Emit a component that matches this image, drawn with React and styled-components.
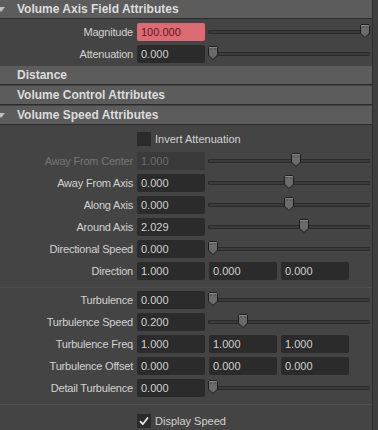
import React from 'react'
import styled, { createGlobalStyle } from "styled-components";

const GlobalStyle = createGlobalStyle`
  body {
    margin: 0;
    background: #444444;
    font-family: "Liberation Sans", Arial, sans-serif;
  }
`;

const speedRows = [
    { label: "Away From Center", value: "1.000", slider: 0.546, disabled: true },
    { label: "Away From Axis", value: "0.000", slider: 0.5 },
    { label: "Along Axis", value: "0.000", slider: 0.5 },
    { label: "Around Axis", value: "2.029", slider: 0.6 },
    { label: "Directional Speed", value: "0.000", slider: 0 },
    { label: "Direction", values: ["1.000", "0.000", "0.000"] },
];

const turbulenceRows = [
    { label: "Turbulence", value: "0.000", slider: 0 },
    { label: "Turbulence Speed", value: "0.200", slider: 0.2 },
    { label: "Turbulence Freq", values: ["1.000", "1.000", "1.000"] },
    { label: "Turbulence Offset", values: ["0.000", "0.000", "0.000"] },
    { label: "Detail Turbulence", value: "0.000", slider: 0 },
];

function Slider({ value }) {
    return <SliderBox>
        <Track />
        <Thumb style={{ left: `${value * 152}px` }} viewBox="0 0 10 14" width="10" height="14">
            <path d="M1.5 0.5 H8.5 L9.5 1.5 V9.2 L5 13.5 L0.5 9.2 V1.5 Z" fill="#6b6b6b" stroke="#1c1c1c" />
            <path d="M1.5 1.5 H8.5" stroke="#8a8a8a" />
            <rect x="2.5" y="2.5" width="1" height="1" fill="#2a2a2a" />
            <rect x="6.5" y="2.5" width="1" height="1" fill="#2a2a2a" />
        </Thumb>
    </SliderBox>;
}

function AttrRow({ row }) {
    return <Row>
        <Label $disabled={row.disabled}>{row.label}</Label>
        {row.values
            ? <Fields>{row.values.map((v, i) => <Field key={i}>{v}</Field>)}</Fields>
            : <>
                <Field $variant={row.disabled ? "disabled" : row.highlight ? "highlight" : "normal"}>{row.value}</Field>
                <Slider value={row.slider} />
            </>}
    </Row>;
}

function CheckBox({ label, checked, after }) {
    return <CheckRow $after={after}>
        <Box>
            {checked && <svg viewBox="0 0 14 14" width="14" height="14">
                <path d="M3 7.2 L5.8 10.2 L11 3.5" fill="none" stroke="#e8e8e8" strokeWidth="1.8" />
            </svg>}
        </Box>
        <CheckText>{label}</CheckText>
    </CheckRow>;
}

export default function App() {
    return <Container>
        <GlobalStyle />
        <Panel>
            <Header $open>Volume Axis Field Attributes</Header>
            <Body $top={4} $bottom={3}>
                <AttrRow row={{ label: "Magnitude", value: "100.000", slider: 1, highlight: true }} />
                <AttrRow row={{ label: "Attenuation", value: "0.000", slider: 0 }} />
            </Body>
            <Header>Distance</Header>
            <Header>Volume Control Attributes</Header>
            <Header $open>Volume Speed Attributes</Header>
            <Body $top={7} $bottom={7}>
                <CheckBox label="Invert Attenuation" after={2} />
                {speedRows.map(r => <AttrRow key={r.label} row={r} />)}
            </Body>
            <Separator />
            <Body $top={1} $bottom={7}>
                {turbulenceRows.map(r => <AttrRow key={r.label} row={r} />)}
            </Body>
            <Separator />
            <Body $top={7} $bottom={6}>
                <CheckBox label="Display Speed" checked />
            </Body>
        </Panel>
        <Strip />
    </Container>;
}

const Container = styled.div`
  display: flex;
  width: 378px;
  height: 430px;
  overflow: hidden;
  background: #444444;
`;

const Panel = styled.div`
  flex: 1;
  display: flex;
  flex-direction: column;
`;

const Strip = styled.div`
  width: 5px;
  border-left: 1px solid #2e2e2e;
  background: #3f3f3f;
`;

const Header = styled.div`
  position: relative;
  height: 18px;
  line-height: 18px;
  padding-left: 17px;
  background: #5c5c5c;
  border-bottom: 1px solid #2c2c2c;
  margin-bottom: 1px;
  color: #dcdcdc;
  font-weight: bold;
  font-size: 12px;
  &::before {
    content: "";
    display: ${p => p.$open ? "block" : "none"};
    position: absolute;
    left: -3px;
    top: 7px;
    border-left: 4px solid transparent;
    border-right: 4px solid transparent;
    border-top: 5px solid #bdbdbd;
  }
`;

const Body = styled.div`
  display: flex;
  flex-direction: column;
  gap: 4px;
  padding: ${p => p.$top}px 0 ${p => p.$bottom}px;
  margin-top: -1px;
`;

const Separator = styled.div`
  height: 1px;
  background: #2c2c2c;
  border-bottom: 1px solid #4e4e4e;
  margin-bottom: 3px;
`;

const Row = styled.div`
  display: flex;
  align-items: center;
  height: 18px;
`;

const Label = styled.div`
  width: 137px;
  padding-right: 4px;
  box-sizing: border-box;
  text-align: right;
  font-size: 11px;
  letter-spacing: -0.2px;
  white-space: nowrap;
  color: ${p => p.$disabled ? "#767676" : "#d2d2d2"};
`;

const Fields = styled.div`
  display: flex;
  gap: 4px;
`;

const Field = styled.div`
  width: 68px;
  height: 18px;
  line-height: 18px;
  box-sizing: border-box;
  padding-left: 4px;
  border-radius: 2px;
  font-size: 11px;
  background: ${p => p.$variant === "highlight" ? "#dd6b73" : p.$variant === "disabled" ? "#3a3a3a" : "#2b2b2b"};
  color: ${p => p.$variant === "highlight" ? "#5e1a1f" : p.$variant === "disabled" ? "#6a6a6a" : "#d2d2d2"};
`;

const SliderBox = styled.div`
  position: relative;
  width: 162px;
  height: 18px;
  margin-left: 3px;
`;

const Track = styled.div`
  position: absolute;
  left: 0;
  right: 0;
  top: 7px;
  height: 2px;
  border: 1px solid #2a2a2a;
  background: #3b3b3b;
  border-radius: 1px;
`;

const Thumb = styled.svg`
  position: absolute;
  top: 1px;
`;

const CheckRow = styled.div`
  display: flex;
  align-items: center;
  height: 14px;
  padding-left: 137px;
  gap: 4px;
  margin-bottom: ${p => p.$after || 0}px;
`;

const Box = styled.div`
  width: 14px;
  height: 14px;
  border-radius: 1px;
  background: #2b2b2b;
`;

const CheckText = styled.div`
  font-size: 11px;
  color: #d2d2d2;
`;
